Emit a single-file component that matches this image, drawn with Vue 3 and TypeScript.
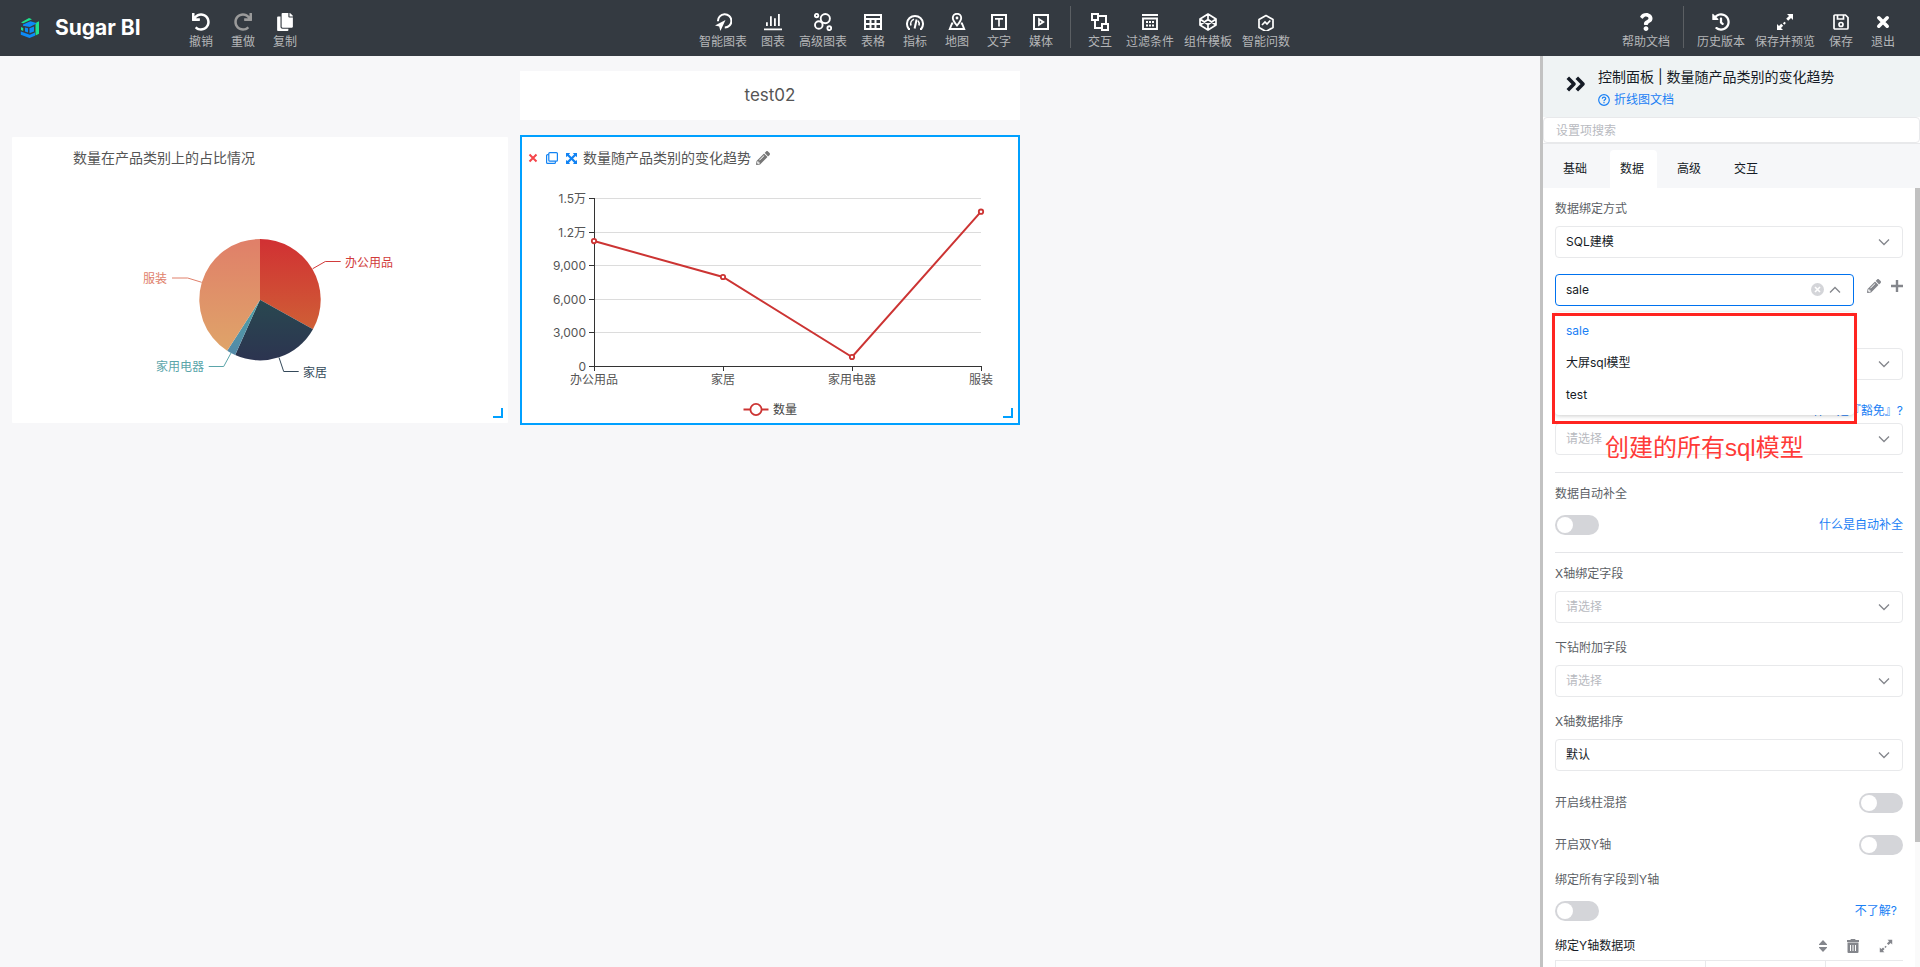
<script setup lang="ts">
import { ref } from 'vue'

interface Tool { label: string; icon: string; muted?: boolean }

const fa = (d: string, w = 512, extra = '') =>
  `<g transform="translate(${(18 - (w * 18) / 512) / 2} 0) scale(${18 / 512}) ${extra}"><path d="${d}"/></g>`

const undoPath = 'M212.333 224.333H12c-6.627 0-12-5.373-12-12V12C0 5.373 5.373 0 12 0h48c6.627 0 12 5.373 12 12v78.112C117.773 39.279 184.26 7.47 258.175 8.007c136.906.994 246.448 111.623 246.157 248.532C504.041 393.258 393.12 504 256.333 504c-64.089 0-122.496-24.313-166.51-64.215-5.099-4.622-5.334-12.554-.467-17.42l33.967-33.967c4.474-4.474 11.662-4.717 16.401-.525C170.76 415.336 211.58 432 256.333 432c97.268 0 176-78.716 176-176 0-97.267-78.716-176-176-176-58.496 0-110.28 28.476-142.274 72.333h98.274c6.627 0 12 5.373 12 12v48c0 6.627-5.373 12-12 12z'
const copyPath = 'M320 448v40c0 13.255-10.745 24-24 24H24c-13.255 0-24-10.745-24-24V120c0-13.255 10.745-24 24-24h72v296c0 30.879 25.121 56 56 56h168zm0-344V0H152c-13.255 0-24 10.745-24 24v368c0 13.255 10.745 24 24 24h272c13.255 0 24-10.745 24-24V128H344c-13.2 0-24-10.8-24-24zm120.971-31.029L375.029 7.029A24 24 0 0 0 358.059 0H352v96h96v-6.059a24 24 0 0 0-7.029-16.97z'
const historyPath = 'M504 255.531c.253 136.64-111.18 248.372-247.82 248.468-59.015.042-113.223-20.53-155.822-54.911-11.077-8.94-11.905-25.541-1.839-35.607l11.267-11.267c8.609-8.609 22.353-9.551 31.891-1.984C173.062 425.135 212.781 440 256 440c101.705 0 184-82.311 184-184 0-101.705-82.311-184-184-184-48.814 0-93.149 18.969-126.068 49.932l50.754 50.754c10.08 10.08 2.941 27.314-11.313 27.314H24c-8.837 0-16-7.163-16-16V38.627c0-14.254 17.234-21.393 27.314-11.314l49.372 49.372C129.209 34.136 189.552 8 256 8c136.81 0 247.747 110.78 248 247.531zm-180.912 78.784l9.823-12.63c8.138-10.463 6.253-25.542-4.21-33.679L288 256.349V152c0-13.255-10.745-24-24-24h-16c-13.255 0-24 10.745-24 24v135.651l65.409 50.874c10.463 8.137 25.541 6.253 33.679-4.21z'
const pencilPath = 'M497.9 142.1l-46.1 46.1c-4.7 4.7-12.3 4.7-17 0l-111-111c-4.7-4.7-4.7-12.3 0-17l46.1-46.1c18.7-18.7 49.1-18.7 67.9 0l60.1 60.1c18.8 18.7 18.8 49.1 0 67.9zM284.2 99.8L21.6 362.4.4 483.9c-2.9 16.4 11.4 30.6 27.8 27.8l121.5-21.3 262.6-262.6c4.7-4.7 4.7-12.3 0-17l-111-111c-4.8-4.7-12.4-4.7-17.1 0zM124.1 339.9c-5.5-5.5-5.5-14.3 0-19.8l154-154c5.5-5.5 14.3-5.5 19.8 0s5.5 14.3 0 19.8l-154 154c-5.5 5.5-14.3 5.5-19.8 0zM88 424h48v36.3l-64.5 11.3-31.1-31.1L51.7 376H88v48z'
const questionPath = 'M202.021 0C122.202 0 70.503 32.703 29.914 91.026c-7.363 10.58-5.093 25.086 5.178 32.874l43.138 32.709c10.373 7.865 25.132 6.026 33.253-4.148 25.049-31.381 43.63-49.449 82.757-49.449 30.764 0 68.816 19.799 68.816 49.631 0 22.552-18.617 34.134-48.993 51.164-35.423 19.86-82.299 44.576-82.299 106.405V320c0 13.255 10.745 24 24 24h72.471c13.255 0 24-10.745 24-24v-5.773c0-42.86 125.268-44.645 125.268-160.627C377.504 66.256 286.902 0 202.021 0zM192 373.459c-38.196 0-69.271 31.075-69.271 69.271 0 38.195 31.075 69.27 69.271 69.27s69.271-31.075 69.271-69.271-31.075-69.27-69.271-69.27z'

const line = (inner: string, w = 2) =>
  `<g fill="none" stroke="currentColor" stroke-width="${w}">${inner}</g>`

const expandIcon =
  '<path d="M11 1h6v6l-2-2-2.8 2.8-2-2L13 3zM1 17v-6l2 2 2.2-2.2 2 2L5 15l2 2z"/><path d="M8.3 11.7l-1.4-1.4 1.6-1.6 1.4 1.4z"/>'

const editTools: Tool[] = [
  { label: '撤销', icon: fa(undoPath) },
  { label: '重做', icon: fa(undoPath, 512, 'translate(512 0) scale(-1 1)'), muted: true },
  { label: '复制', icon: fa(copyPath, 448) },
]

const chartTools: Tool[] = [
  { label: '智能图表', icon: line('<path d="M4 8.2A6.7 6.7 0 1 1 10.8 14.6"/>') + '<path d="M11.5 7 1 12.6l4.2 1L6.4 18z"/>' },
  { label: '图表', icon: '<path d="M0 15.5h18v1.8H0zM2 9.3h1.8v3.7H2zM6 3.3h1.8V13H6zM10 5.3h1.8V13H10zM14 1h1.8v12H14z"/>' },
  { label: '高级图表', icon: line('<circle cx="2.6" cy="2.6" r="1.7"/><circle cx="11.3" cy="5.6" r="4.6"/><circle cx="4.8" cy="12" r="3.8"/><circle cx="15.3" cy="15.2" r="1.9"/>', 1.9) },
  { label: '表格', icon: line('<path d="M1 2h16v14H1zM1 6h16M1 11h16M6.5 6v10M11.5 6v10"/>') },
  { label: '指标', icon: line('<path d="M4 16H2.8a8 8 0 1 1 12.4 0H14"/><path d="M5 12.5a5 5 0 0 1 3-6.3M13 12.5a5 5 0 0 0-1-4.8" stroke-width="1.6"/><path d="M8.6 15.5 10.6 6.5"/>') },
  { label: '地图', icon: line('<path d="M9 12.5C6.5 9.5 4.8 7.3 4.8 5a4.2 4.2 0 0 1 8.4 0c0 2.3-1.7 4.5-4.2 7.5z"/><path d="M5.2 10.5H4L1.8 16h14.4L14 10.5h-1.2"/>', 1.9) + '<circle cx="9" cy="5" r="1.4"/>' },
  { label: '文字', icon: line('<path d="M2 2h14v14H2z"/><path d="M5 5.8h8M9 5.8V13.5" stroke-width="1.7"/>') },
  { label: '媒体', icon: line('<path d="M2 2h14v14H2z"/><path d="M7 6.2v5.6L11.3 9z" stroke-width="1.8"/>') },
]

const linkTools: Tool[] = [
  { label: '交互', icon: line('<path d="M1 1h6v6H1zM11 11h6v6h-6zM7 3h8v8M4 7v8h7"/>') },
  { label: '过滤条件', icon: line('<path d="M1 2h16M2 5.5h14V16H2z"/>', 1.9) + '<path d="M5 8h2v2H5zM8 8h2v2H8zM11 8h2v2h-2zM5 11.5h2v2H5zM8 11.5h2v2H8zM11 11.5h2v2h-2z"/>' },
  { label: '组件模板', icon: line('<path d="M9 1l8 5v6l-8 5-8-5V6zM1 6l8 5.5L17 6M1 12l8-5.5 8 5.5M9 1v5.5M9 11.5V17" stroke-linejoin="round"/>', 1.7) },
  { label: '智能问数', icon: line('<path d="M9 2.5l7 4v8l-7 4-7-4v-8z" stroke-linejoin="round"/><path d="M5 12l3-3 2 2 3.3-3.5"/>', 1.7) },
]

const helpTools: Tool[] = [{ label: '帮助文档', icon: fa(questionPath, 384) }]

const fileTools: Tool[] = [
  { label: '历史版本', icon: fa(historyPath) },
  { label: '保存并预览', icon: expandIcon },
  { label: '保存', icon: line('<path d="M3 2h10.5L16 4.5V15a1 1 0 0 1-1 1H3a1 1 0 0 1-1-1V3a1 1 0 0 1 1-1z"/><path d="M5.5 2v4h6V2"/><circle cx="9" cy="11.5" r="2"/>', 1.7) },
  { label: '退出', icon: '<path d="M4.8 4.8 13.2 13.2M13.2 4.8 4.8 13.2" stroke="currentColor" stroke-width="3.6" stroke-linecap="round"/>' },
]

const tabs = ['基础', '数据', '高级', '交互']
const activeTab = ref('数据')

const models = ['sale', '大屏sql模型', 'test']
const model = ref('sale')

/* Pie sectors, clockwise from the top */
const PIE = { cx: 248, cy: 120.7, r: 60.7 }
const sales = [
  { name: '办公用品', value: 11190, from: '#d13033', to: '#cf5f36', text: '#d13b3b', leader: '300.7,89.7 313.3,82.5 328.7,82.5', x: 333, y: 82.5, anchor: 'start' },
  { name: '家居', value: 7970, from: '#294850', to: '#2c3450', text: '#34495a', leader: '267,178.5 271.7,192.5 286.7,192.5', x: 291, y: 192.5, anchor: 'start' },
  { name: '家用电器', value: 806, from: '#4fa2a6', to: '#5489a8', text: '#5ba5aa', leader: '219,174 211.7,187.5 196.7,187.5', x: 192, y: 187, anchor: 'end' },
  { name: '服装', value: 13820, from: '#e07f69', to: '#dfa469', text: '#e0806b', leader: '189.7,103.3 175.7,99 160,99', x: 155, y: 99, anchor: 'end' },
]
const total = sales.reduce((s, d) => s + d.value, 0)
let acc = 0
const sectors = sales.map((d) => {
  const a0 = (acc / total) * Math.PI * 2
  acc += d.value
  const a1 = (acc / total) * Math.PI * 2
  const pt = (a: number) => `${PIE.cx + PIE.r * Math.sin(a)} ${PIE.cy - PIE.r * Math.cos(a)}`
  return { ...d, path: `M${PIE.cx} ${PIE.cy}L${pt(a0)}A${PIE.r} ${PIE.r} 0 ${a1 - a0 > Math.PI ? 1 : 0} 1 ${pt(a1)}Z` }
})

/* Line chart scales */
const yTicks = ['0', '3,000', '6,000', '9,000', '1.2万', '1.5万'].map((label, i) => ({ label, y: 187.5 - Math.round(i * 33.6) }))
const points = sales.map((d, i) => ({ name: d.name, x: 72 + i * 129, y: 187 - (d.value / 15000) * 167.5 }))
const polyline = points.map((p) => `${p.x},${p.y}`).join(' ')
</script>

<template>
  <div class="app">
    <header class="topbar">
      <div class="brand-area">
        <svg class="logo" viewBox="0 0 20 20" aria-hidden="true">
          <path d="M1 4.5 9 0l3 1.200L3.200 5.200zM15.500 5 19 3.300v12.500l-3.500 1.700z" fill="#1fe08d" />
          <path d="M1 9 3.200 10v3L1 12z" fill="#1fe08d" />
          <path d="M3 6.500 10.500 3.300 17 5.300 9.800 9 3 7.800zM.8 13.500l9 3.300 5.200-2.300v3.200L9.500 20 .8 16.800z" fill="#0d8bf7" />
          <path d="M5 9.500 8 10.300v4.200l-3-1zM9.500 10.300 14 8.500v5l-4.500 1.800z" fill="#0d8bf7" />
        </svg>
        <h1 class="brand">Sugar BI</h1>
        <nav class="tools" aria-label="编辑">
          <button v-for="t in editTools" :key="t.label" type="button" class="tool" :class="{ muted: t.muted }">
            <svg viewBox="0 0 18 18" fill="currentColor" v-html="t.icon" /><span>{{ t.label }}</span>
          </button>
        </nav>
      </div>
      <nav class="tools" aria-label="组件">
        <button v-for="t in chartTools" :key="t.label" type="button" class="tool">
          <svg viewBox="0 0 18 18" fill="currentColor" v-html="t.icon" /><span>{{ t.label }}</span>
        </button>
        <i class="sep" />
        <button v-for="t in linkTools" :key="t.label" type="button" class="tool">
          <svg viewBox="0 0 18 18" fill="currentColor" v-html="t.icon" /><span>{{ t.label }}</span>
        </button>
      </nav>
      <nav class="tools" aria-label="文件">
        <button v-for="t in helpTools" :key="t.label" type="button" class="tool">
          <svg viewBox="0 0 18 18" fill="currentColor" v-html="t.icon" /><span>{{ t.label }}</span>
        </button>
        <i class="sep" />
        <button v-for="t in fileTools" :key="t.label" type="button" class="tool">
          <svg viewBox="0 0 18 18" fill="currentColor" v-html="t.icon" /><span>{{ t.label }}</span>
        </button>
      </nav>
    </header>

    <div class="workspace">
      <main class="canvas">
        <h2 class="page-title">test02</h2>

        <section class="widget pie">
          <div class="widget-head"><h3>数量在产品类别上的占比情况</h3></div>
          <svg class="chart" viewBox="0 0 496 244">
            <defs>
              <linearGradient v-for="(s, i) in sectors" :id="'sector' + i" :key="s.name" x1="0" y1="0" x2="0" y2="1">
                <stop offset="0" :stop-color="s.from" /><stop offset="1" :stop-color="s.to" />
              </linearGradient>
            </defs>
            <g v-for="(s, i) in sectors" :key="s.name">
              <path :d="s.path" :fill="`url(#sector${i})`" />
              <polyline :points="s.leader" fill="none" :stroke="s.text" />
              <text :x="s.x" :y="s.y + 5" :text-anchor="s.anchor" :fill="s.text">{{ s.name }}</text>
            </g>
          </svg>
          <i class="resize" />
        </section>

        <section class="widget selected">
          <div class="widget-head">
            <div class="widget-tools">
              <button type="button" aria-label="删除" class="danger">
                <svg width="10" height="10" viewBox="0 0 10 10"><path d="M1.5 1.5l7 7M8.5 1.5l-7 7" stroke="currentColor" stroke-width="2" /></svg>
              </button>
              <button type="button" aria-label="复制组件">
                <svg width="12" height="12" viewBox="0 0 12 12" fill="none" stroke="currentColor" stroke-width="1.2"><rect x="2.8" y=".6" width="8.6" height="8.6" rx="1" /><path d="M2.8 2.6H1.6a1 1 0 0 0-1 1v6.8a1 1 0 0 0 1 1h6.8a1 1 0 0 0 1-1V9.2" /></svg>
              </button>
              <button type="button" aria-label="放大">
                <svg width="11" height="11" viewBox="0 0 12 12" fill="currentColor"><path d="M0 0h4.5L3.2 1.5 6 4.3 8.8 1.5 7.5 0H12v4.5l-1.5-1.3L7.7 6l2.8 2.8L12 7.5V12H7.5l1.3-1.5L6 7.7l-2.8 2.8L4.5 12H0V7.5l1.5 1.3L4.3 6 1.5 3.2 0 4.5z" /></svg>
              </button>
            </div>
            <h3>数量随产品类别的变化趋势</h3>
            <button type="button" aria-label="编辑标题" class="rename">
              <svg width="14" height="14" viewBox="0 0 512 512" fill="currentColor"><path :d="pencilPath" /></svg>
            </button>
          </div>
          <svg class="chart" viewBox="0 0 496 244">
            <g v-for="(t, i) in yTicks" :key="t.label">
              <line v-if="i" x1="73" x2="459" :y1="t.y" :y2="t.y" stroke="#dcdcdc" />
              <line x1="67" x2="72" :y1="t.y" :y2="t.y" stroke="#333" />
              <text x="64" :y="t.y + 4" text-anchor="end" fill="#555">{{ t.label }}</text>
            </g>
            <path d="M72.5 19v173M72 187.5h388M201.500 187v5M330.500 187v5M459.500 187v5" fill="none" stroke="#333" />
            <text v-for="p in points" :key="p.name" :x="p.x" y="205" text-anchor="middle" fill="#555">{{ p.name }}</text>
            <polyline :points="polyline" fill="none" stroke="#cc3433" stroke-width="2" />
            <circle v-for="p in points" :key="p.name" :cx="p.x" :cy="p.y" r="2.2" fill="#fff" stroke="#cc3433" stroke-width="1.8" />
            <path d="M221.5 230.5h25" stroke="#cc3433" stroke-width="2" />
            <circle cx="234" cy="230.5" r="5.6" fill="#fff" stroke="#cc3433" stroke-width="1.8" />
            <text x="251" y="235" fill="#444">数量</text>
          </svg>
          <i class="resize" />
        </section>
      </main>

      <aside class="panel">
        <div class="panel-head">
          <button type="button" class="collapse" aria-label="收起面板">
            <svg width="20" height="16" viewBox="0 0 20 16" fill="none" stroke="currentColor" stroke-width="3.6"><path d="M1.8 1.8 8 8l-6.2 6.2M10.8 1.8 17 8l-6.2 6.2" stroke-linejoin="round" /></svg>
          </button>
          <div>
            <h2>控制面板 | 数量随产品类别的变化趋势</h2>
            <a href="#" class="doc">
              <svg width="12" height="12" viewBox="0 0 12 12" fill="none" stroke="currentColor" stroke-width="1.2"><circle cx="6" cy="6" r="5.3" /><path d="M4.300 4.800c0-2.300 3.400-2.200 3.400-.2C7.700 5.900 6 5.800 6 7.200M6 8v1.300" /></svg>
              折线图文档
            </a>
          </div>
        </div>
        <input class="search" type="text" placeholder="设置项搜索" aria-label="设置项搜索" />
        <div class="tabs" role="tablist">
          <button v-for="t in tabs" :key="t" type="button" role="tab" :aria-selected="t === activeTab" :class="{ active: t === activeTab }" @click="activeTab = t">{{ t }}</button>
        </div>

        <div class="settings-area">
          <div class="settings">
            <div class="field">
              <label for="bind">数据绑定方式</label>
              <div class="picker"><select id="bind"><option>SQL建模</option></select><svg class="chev" viewBox="0 0 12 8"><path d="M1 1.5l5 5 5-5" /></svg></div>
            </div>

            <div class="model-row">
              <div class="picker open">
                <select v-model="model" aria-label="数据模型"><option v-for="m in models" :key="m">{{ m }}</option></select>
                <button type="button" class="clear" aria-label="清除">
                  <svg width="13" height="13" viewBox="0 0 13 13"><circle cx="6.5" cy="6.5" r="6.5" fill="#d4d5d9" /><path d="M4 4l5 5M9 4 4 9" stroke="#fff" stroke-width="1.6" /></svg>
                </button>
                <svg class="chev" viewBox="0 0 12 8"><path d="M1 6.5l5-5 5 5" /></svg>
                <div class="menu" role="listbox" aria-label="数据模型">
                  <button v-for="m in models" :key="m" type="button" role="option" :aria-selected="m === model" :class="{ on: m === model }" @click="model = m">{{ m }}</button>
                </div>
                <div class="callout"><p>创建的所有sql模型</p></div>
              </div>
              <button type="button" class="mini" aria-label="编辑模型"><svg width="14" height="14" viewBox="0 0 512 512" fill="currentColor"><path :d="pencilPath" /></svg></button>
              <button type="button" class="mini" aria-label="新建模型"><svg width="12" height="12" viewBox="0 0 12 12"><path d="M6 0v12M0 6h12" stroke="currentColor" stroke-width="2.4" /></svg></button>
            </div>

            <div class="picker covered"><select aria-label="数据表"><option></option></select><svg class="chev" viewBox="0 0 12 8"><path d="M1 1.5l5 5 5-5" /></svg></div>

            <div class="exempt">
              <a href="#">什么是『豁免』?</a>
              <div class="picker"><select class="empty" aria-label="过滤条件"><option>请选择</option></select><svg class="chev" viewBox="0 0 12 8"><path d="M1 1.5l5 5 5-5" /></svg></div>
            </div>

            <hr />

            <div class="switch-field">
              <label for="fill">数据自动补全</label>
              <div class="line"><input id="fill" type="checkbox" role="switch" class="switch" /><a href="#">什么是自动补全</a></div>
            </div>

            <hr />

            <div class="field first">
              <label for="xf">X轴绑定字段</label>
              <div class="picker"><select id="xf" class="empty"><option>请选择</option></select><svg class="chev" viewBox="0 0 12 8"><path d="M1 1.5l5 5 5-5" /></svg></div>
            </div>
            <div class="field">
              <label for="drill">下钻附加字段</label>
              <div class="picker"><select id="drill" class="empty"><option>请选择</option></select><svg class="chev" viewBox="0 0 12 8"><path d="M1 1.5l5 5 5-5" /></svg></div>
            </div>
            <div class="field">
              <label for="sort">X轴数据排序</label>
              <div class="picker"><select id="sort"><option>默认</option></select><svg class="chev" viewBox="0 0 12 8"><path d="M1 1.5l5 5 5-5" /></svg></div>
            </div>

            <div class="line spaced"><label for="mix">开启线柱混搭</label><input id="mix" type="checkbox" role="switch" class="switch" /></div>
            <div class="line spaced"><label for="dual">开启双Y轴</label><input id="dual" type="checkbox" role="switch" class="switch" /></div>

            <div class="switch-field below">
              <label for="all">绑定所有字段到Y轴</label>
              <div class="line"><input id="all" type="checkbox" role="switch" class="switch" /><a href="#" class="inset">不了解?</a></div>
            </div>

            <div class="y-head">
              <h3>绑定Y轴数据项</h3>
              <button type="button" aria-label="排序"><svg width="8" height="12" viewBox="0 0 8 12" fill="currentColor"><path d="M4 0l4 4.2v.8H0v-.8zM4 12 0 7.800V7h8v.8z" /></svg></button>
              <button type="button" aria-label="删除"><svg width="12" height="14" viewBox="0 0 12 14" fill="currentColor"><path d="M4 0h4l.7 1H12v2H0V1h3.3z" /><path fill-rule="evenodd" d="M.5 3.500h11V13a1 1 0 0 1-1 1h-9a1 1 0 0 1-1-1zM3 6v6h1V6zM5.500 6v6h1V6zM8 6v6h1V6z" /></svg></button>
              <button type="button" aria-label="展开"><svg width="14" height="14" viewBox="0 0 18 18" fill="currentColor" v-html="expandIcon" /></button>
            </div>
            <table class="y-table"><tbody><tr><td class="c1"></td><td class="c2"></td><td></td></tr></tbody></table>
          </div>
          <div class="rail"><div class="thumb" /></div>
        </div>
      </aside>
    </div>
  </div>
</template>

<style>
body { margin: 0; }
</style>

<style scoped>
.app {
  display: flex;
  flex-direction: column;
  height: 100vh;
  overflow: hidden;
  background: #f7f7f9;
  color: #151b26;
  font: 12px/20px Inter, "Noto Sans CJK SC", sans-serif;
}
*, *::before { box-sizing: border-box; }
h1, h2, h3, p { margin: 0; font-weight: 400; }
button {
  padding: 0;
  border: 0;
  background: none;
  color: inherit;
  font: inherit;
  cursor: pointer;
}
svg { display: block; }
a { color: #1a80f5; text-decoration: none; }

.topbar {
  display: flex;
  justify-content: space-between;
  flex: none;
  height: 56px;
  padding-right: 16px;
  background: #343a41;
  color: #fff;
}
.brand-area { display: flex; align-items: center; padding: 0 66px 0 20px; }
.logo { width: 20px; height: 20px; }
.brand { width: 140px; padding-left: 15px; font-size: 21px; font-weight: 700; line-height: 28px; white-space: nowrap; }
.tools { display: flex; align-items: flex-start; align-self: stretch; }
.tool {
  display: flex;
  flex-direction: column;
  align-items: center;
  min-width: 42px;
  padding: 13px 5px 0;
  line-height: 22px;
  white-space: nowrap;
}
.tool svg { width: 18px; height: 18px; }
.tool span { color: #b4b6b8; }
.tool.muted svg { color: #9a9a9a; }
.sep { width: 1px; height: 42px; margin: 6px 8px 0; background: #5b5f63; }

.workspace { display: flex; flex: 1; min-height: 0; }
.canvas {
  display: grid;
  grid-template-columns: repeat(3, 1fr);
  align-content: start;
  gap: 15px 10px;
  flex: 1;
  padding: 15px 10px;
}
.page-title {
  grid-column: 2;
  background: #fff;
  color: #555;
  font-size: 17px;
  line-height: 49px;
  text-align: center;
}
.widget {
  position: relative;
  border: 2px solid transparent;
  border-radius: 3px;
  background: #fff padding-box;
}
.widget.pie { grid-column: 1; }
.widget.selected { border-color: #00a0ff; border-radius: 0; }
.widget-head { display: flex; align-items: center; height: 42px; color: #555; }
.widget-head h3 { font-size: 14px; }
.pie .widget-head { padding-left: 61px; }
.widget-tools { display: flex; align-items: center; gap: 8px; width: 61px; padding-left: 6px; color: #1283f3; }
.danger { color: #f5454a; }
.rename { margin-left: 5px; color: #777; }
.chart { width: 100%; }
.chart text { font-size: 12px; }
.resize {
  position: absolute;
  right: 5px;
  bottom: 5px;
  width: 10px;
  height: 10px;
  border: solid #00a0ff;
  border-width: 0 2px 2px 0;
}

.panel {
  display: flex;
  flex-direction: column;
  flex: none;
  width: 380px;
  border-left: 3px solid #c2c2c2;
  background: #fff;
}
.panel-head { display: flex; gap: 12px; height: 61px; padding: 10px 0 0 23px; background: #eff3f4; }
.collapse { align-self: flex-start; padding-top: 10px; }
.panel-head h2 { font-size: 14px; line-height: 22px; white-space: nowrap; }
.doc { display: flex; align-items: center; gap: 4px; line-height: 24px; }
.search {
  height: 26px;
  padding: 0 12px;
  border: 1px solid #e8e9eb;
  border-radius: 4px;
  outline: 0;
  background: #fff;
  font: inherit;
}
.search::placeholder { color: #b8babf; opacity: 1; }
.tabs {
  display: flex;
  align-items: flex-end;
  gap: 10px;
  height: 45px;
  padding-left: 10px;
  border-top: 1px solid #e8e9eb;
  background: #f6f7f9;
}
.tabs button { height: 38px; padding: 0 13px 0 10px; border-radius: 4px 4px 0 0; }
.tabs .active { background: #fff; }

.settings-area { display: flex; flex: 1; min-height: 0; }
.settings {
  flex: 1;
  padding: 11px 12px 0;
  overflow-y: auto;
  scrollbar-width: none;
}
.rail { width: 5px; background: #fafafa; }
.thumb { height: 84%; background: #c1c1c1; }
label { color: #5c5f66; }
.field { margin-top: 15px; }
.field:first-child, .field.first { margin-top: 0; }
.field label { display: block; }
.picker { position: relative; margin-top: 7px; }
.picker select {
  display: block;
  width: 100%;
  height: 32px;
  padding: 0 40px 0 10px;
  border: 1px solid #e8e9eb;
  border-radius: 4px;
  outline: 0;
  appearance: none;
  background: #fff;
  color: #151b26;
  font: inherit;
}
.picker select.empty { color: #b8babf; }
.picker.covered { margin-top: 42px; }
.exempt { margin-top: 21px; text-align: right; }
.exempt .picker { margin-top: 2px; }
.chev {
  position: absolute;
  top: 12px;
  right: 13px;
  width: 12px;
  height: 8px;
  fill: none;
  stroke: #84868c;
  stroke-width: 1.3;
  pointer-events: none;
}
.model-row { display: flex; margin-top: 16px; }
.picker.open { flex: 1; margin: 0 13px 0 0; }
.picker.open select { border-color: #0072ef; }
.clear { position: absolute; top: 9px; right: 30px; }
.mini { align-self: flex-start; margin-top: 4px; height: 16px; color: #84868c; }
.mini + .mini { margin-left: 10px; }
.menu {
  position: absolute;
  z-index: 2;
  top: 38px;
  left: 0;
  right: 0;
  padding: 3px 0 4px;
  border-radius: 4px;
  background: #fff;
  box-shadow: 0 1px 4px rgba(0, 0, 0, 0.2);
}
.menu button { display: block; width: 100%; height: 32px; padding-left: 11px; text-align: left; }
.menu .on { color: #1a80f5; }
.callout {
  position: absolute;
  z-index: 3;
  top: 39px;
  left: -3px;
  right: -3px;
  height: 111px;
  border: 3px solid #ff2420;
  pointer-events: none;
}
.callout p {
  position: absolute;
  top: 114px;
  left: 50px;
  color: #ff3b38;
  font-family: "Liberation Sans", "Noto Sans CJK SC", sans-serif;
  font-size: 24px;
  line-height: 36px;
  white-space: nowrap;
}
hr { height: 1px; margin: 17px 0 11px; border: 0; background: #e4e5e8; }
.switch-field .line { margin-top: 11px; }
.switch-field label { display: block; }
.switch-field.below { margin-top: 15px; }
.line { display: flex; align-items: center; justify-content: space-between; height: 20px; }
.line.spaced { margin-top: 22px; }
.inset { padding-right: 6px; }
.switch {
  width: 44px;
  height: 20px;
  margin: 0;
  padding: 2px;
  border-radius: 10px;
  appearance: none;
  background: #d4d5d9;
}
.switch::before { content: ""; display: block; width: 16px; height: 16px; border-radius: 8px; background: #fff; }
.switch:checked { background: #0072ef; }
.switch:checked::before { margin-left: 24px; }
.y-head { display: flex; align-items: center; margin-top: 15px; padding-right: 10px; color: #84868c; }
.y-head h3 { flex: 1; color: #151b26; font-size: 12px; }
.y-head button + button { margin-left: 20px; }
.y-table { width: 100%; margin-top: 4px; border-collapse: collapse; table-layout: fixed; border: solid #e8e9eb; border-width: 1px 0 1px 1px; }
.y-table td { height: 152px; padding: 0; border-right: 1px solid #e8e9eb; }
.y-table td:last-child { border-right: 0; }
.c1 { width: 150px; }
.c2 { width: 120px; }
</style>
